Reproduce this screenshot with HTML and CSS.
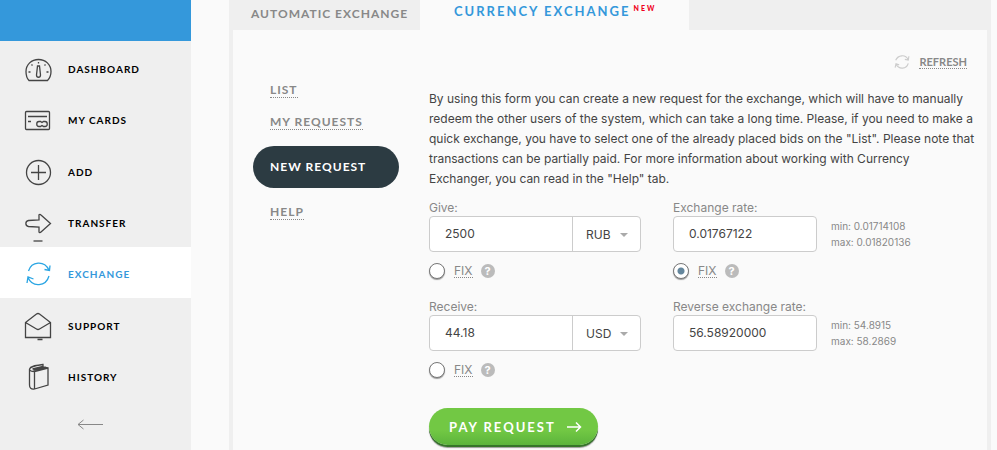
FILE: index.html
```html
<!DOCTYPE html>
<html lang="en">

<head>
    <meta charset="UTF-8">
    <meta name="viewport" content="width=device-width, initial-scale=1.0">
    <title>Currency Exchange</title>
    <link rel="stylesheet" href="styles.css">
</head>

<body>
    <div class="page">
        <aside class="sidebar">
            <div class="sidebar-top"></div>
            <nav class="main-menu">
                <a href="#dashboard">
                    <svg class="icon" viewBox="0 0 28 28">
                        <path d="M5 25.500C2.500 23 2 20 2 16.500C2 9.500 7.500 4.500 14.500 4.500S27 9.500 27 16.500C27 20 26 23 23.500 25.500Z" />
                        <path d="M13.500 11h2l1 9c0 3-4 3-4 0z" />
                        <path d="M14.500 7v1.500M7.500 9.500l1 1M21.500 9.500l-1 1M4.500 17h2M22.500 17h2" />
                    </svg>
                    <span>DASHBOARD</span>
                </a>
                <a href="#cards">
                    <svg class="icon" viewBox="0 0 28 28">
                        <rect x="1.500" y="5.500" width="24" height="18" rx="1" />
                        <path d="M4 10.500h19M4 15.500h3" />
                        <path d="M15 15.500h1.500l1.500 1 1.500-1H21c3 0 3 5 0 5h-1.500l-1.500-1-1.500 1H15c-3 0-3-5 0-5z" />
                    </svg>
                    <span>MY CARDS</span>
                </a>
                <a href="#add">
                    <svg class="icon" viewBox="0 0 28 28">
                        <circle cx="14.500" cy="14.500" r="12" />
                        <path d="M14.500 7v15M7 14.500h15" />
                    </svg>
                    <span>ADD</span>
                </a>
                <a href="#transfer">
                    <svg class="icon" viewBox="0 0 28 28">
                        <path d="M15 6.500C14.500 5.500 16 5 17 6L26.500 14.500L17 23C16 24 15 23.500 15 23V18L4.500 17.500C1 17 1 12 4.500 11.500L15 11Z" />
                        <path d="M9.500 32h9" />
                    </svg>
                    <span>TRANSFER</span>
                </a>
                <a href="#exchange" class="active">
                    <svg class="icon" viewBox="0 0 28 28">
                        <path d="M4.500 11C7.500 1.500 20 0 25 10M26 5.500L25.500 10.500L20.500 9.500M25 16C22 26.500 8.500 28 4 17.500M3 23L4 17L9.500 19" />
                    </svg>
                    <span>EXCHANGE</span>
                </a>
                <a href="#support">
                    <svg class="icon" viewBox="0 0 28 28">
                        <path d="M1.500 10.500L12.500 2Q14 1 15.500 2L26.500 10.500V25.500H1.500ZM1.500 10.500L12.500 17Q14 18 15.500 17L26.500 10.500M13.500 27.500h5" />
                    </svg>
                    <span>SUPPORT</span>
                </a>
                <a href="#history">
                    <svg class="icon" viewBox="0 0 28 28">
                        <path d="M10.500 8.500L24 5V22L10.500 26ZM10.500 26C7 26.500 5.500 25 5.500 22V6C5.500 8 7.500 8.500 10.500 8.500M5.500 6C6.500 3 12 2.500 19 1.500V4L24 5M8.500 6L19 3.500M9.500 7L22 4.500" />
                    </svg>
                    <span>HISTORY</span>
                </a>
            </nav>
            <button type="button" class="collapse" aria-label="Collapse menu">
                <svg width="28" height="12" viewBox="0 0 28 12">
                    <path d="M2 6.500h25M7.500 2L2 6.500L7.500 11" />
                </svg>
            </button>
        </aside>

        <main class="content">
            <nav class="tabs">
                <a href="#automatic">AUTOMATIC EXCHANGE</a>
                <a href="#currency" class="active">CURRENCY EXCHANGE<sup>NEW</sup></a>
            </nav>

            <div class="panel">
                <div class="toolbar">
                    <svg width="16" height="16" viewBox="0 0 28 28">
                        <path d="M3 11C7 1.500 20 0 25 10M26 4L25 10.500L19 9.500M25 16.500C22 26.500 8.500 28 3.500 17.500M2 24L3.500 17L9 19" />
                    </svg>
                    <a href="#refresh" class="dotted">REFRESH</a>
                </div>

                <div class="columns">
                    <ul class="sub-menu">
                        <li><a href="#list" class="dotted">LIST</a></li>
                        <li><a href="#my" class="dotted">MY REQUESTS</a></li>
                        <li class="active"><a href="#new">NEW REQUEST</a></li>
                        <li><a href="#help" class="dotted">HELP</a></li>
                    </ul>

                    <form class="request-form">
                        <p>
                            By using this form you can create a new request for the exchange, which will have to manually<br>
                            redeem the other users of the system, which can take a long time. Please, if you need to make a<br>
                            quick exchange, you have to select one of the already placed bids on the "List". Please note that<br>
                            transactions can be partially paid. For more information about working with Currency<br>
                            Exchanger, you can read in the "Help" tab.
                        </p>

                        <div class="fields">
                            <div class="field">
                                <label for="give">Give:</label>
                                <div class="amount">
                                    <input type="text" id="give" value="2500">
                                    <div class="currency">
                                        <select aria-label="Give currency">
                                            <option>RUB</option>
                                            <option>USD</option>
                                        </select>
                                    </div>
                                </div>
                                <div class="fix">
                                    <input type="radio" name="fix" id="fix-give">
                                    <label for="fix-give" class="dotted">FIX</label>
                                    <span class="hint">?</span>
                                </div>
                            </div>

                            <div class="field">
                                <label for="rate">Exchange rate:</label>
                                <div class="rate">
                                    <input type="text" id="rate" value="0.01767122">
                                    <div class="limits">min: 0.01714108<br>max: 0.01820136</div>
                                </div>
                                <div class="fix">
                                    <input type="radio" name="fix" id="fix-rate" checked>
                                    <label for="fix-rate" class="dotted">FIX</label>
                                    <span class="hint">?</span>
                                </div>
                            </div>

                            <div class="field">
                                <label for="receive">Receive:</label>
                                <div class="amount">
                                    <input type="text" id="receive" value="44.18">
                                    <div class="currency">
                                        <select aria-label="Receive currency">
                                            <option>USD</option>
                                            <option>RUB</option>
                                        </select>
                                    </div>
                                </div>
                                <div class="fix">
                                    <input type="radio" name="fix" id="fix-receive">
                                    <label for="fix-receive" class="dotted">FIX</label>
                                    <span class="hint">?</span>
                                </div>
                            </div>

                            <div class="field">
                                <label for="reverse">Reverse exchange rate:</label>
                                <div class="rate">
                                    <input type="text" id="reverse" value="56.58920000">
                                    <div class="limits">min: 54.8915<br>max: 58.2869</div>
                                </div>
                            </div>
                        </div>

                        <button type="submit" class="pay">
                            PAY REQUEST
                            <svg width="16" height="12" viewBox="0 0 16 12">
                                <path d="M1 6h13M10 1.500L14.500 6L10 10.500" />
                            </svg>
                        </button>
                    </form>
                </div>
            </div>
        </main>
    </div>
</body>

</html>
```
FILE: styles.css
```css
* {
    box-sizing: border-box;
}

body {
    margin: 0;
    background-color: #fafafa;
    color: #444;
    font-family: Inter, "Open Sans", sans-serif;
    font-size: 12px;
}

a {
    text-decoration: none;
}

svg {
    fill: none;
    stroke: currentColor;
}

.page {
    display: flex;
    min-height: 100vh;
}

/* Sidebar */
.sidebar {
    flex: 0 0 191px;
    background-color: #efefef;
}

.sidebar-top {
    height: 41px;
    background-color: #3498db;
}

.main-menu {
    display: grid;
    grid-auto-rows: 1fr;
    min-height: 360px;
}

.main-menu a {
    display: flex;
    align-items: center;
    gap: 16px;
    padding: 4px 0 0 24px;
    color: #000;
    font: bold 10px Lato, sans-serif;
    letter-spacing: 1px;
}

.main-menu .icon {
    width: 28px;
    height: 28px;
    overflow: visible;
    color: #444;
    stroke-width: 1.3;
}

.main-menu a.active {
    background-color: #fff;
    color: #3498db;
}

.main-menu a.active .icon {
    color: #2aa5e3;
}

.collapse {
    display: block;
    margin: 17px 0 0 76px;
    padding: 0;
    border: none;
    background: none;
    color: #888;
    cursor: pointer;
}

.collapse svg {
    display: block;
}

/* Content */
.content {
    display: flex;
    flex-direction: column;
    flex: 1;
    min-width: 0;
    margin: 0 6px 0 38px;
    padding: 0 4px;
    background-color: #efefef;
}

.tabs {
    display: flex;
    height: 30px;
    font: bold 12px Lato, sans-serif;
    letter-spacing: 1px;
}

.tabs a {
    flex: 0 0 187px;
    padding-left: 18px;
    line-height: 28px;
    color: #888;
    white-space: nowrap;
}

.tabs a.active {
    flex: 0 0 269px;
    padding-left: 34px;
    background-color: #fafafa;
    color: #3498db;
    font-size: 13px;
    line-height: 22px;
    letter-spacing: 2px;
}

.tabs sup {
    margin-left: 3px;
    color: #f00020;
    font-size: 7px;
    font-weight: 900;
    line-height: 1;
}

.panel {
    flex: 1;
    padding: 21px 20px 0;
    background-color: #fafafa;
}

.dotted {
    border-bottom: 1px dotted #888;
    color: #888;
}

.toolbar {
    display: flex;
    justify-content: flex-end;
    align-items: center;
    gap: 9px;
    height: 21px;
    color: #ccc;
    font: bold 11px Lato, sans-serif;
}

.toolbar svg {
    stroke-width: 2;
}

.columns {
    display: flex;
    gap: 30px;
}

/* Sub menu */
.sub-menu {
    flex: 0 0 146px;
    margin: 2px 0 0;
    padding: 0;
    list-style: none;
    font: bold 12px/32px Lato, sans-serif;
    letter-spacing: 1px;
}

.sub-menu li {
    padding-left: 17px;
}

.sub-menu .active {
    margin: 8px 0;
    border-radius: 21px;
    background-color: #2c3b42;
    line-height: 42px;
}

.sub-menu .active a {
    color: #fff;
}

/* Form */
.request-form {
    flex: 1;
    min-width: 0;
    padding-top: 17px;
}

.request-form p {
    margin: 0 0 11px;
    line-height: 20px;
    white-space: nowrap;
}

.fields {
    display: grid;
    grid-template-columns: 212px 1fr;
    gap: 20px 32px;
    color: #888;
}

.field > label {
    display: block;
    line-height: 16px;
}

.amount,
.rate > input {
    height: 36px;
    border: 1px solid #ccc;
    border-radius: 4px;
    background-color: #fff;
}

.amount {
    display: flex;
}

input,
select {
    margin: 0;
    color: #444;
    font: inherit;
}

input[type="text"] {
    width: 144px;
    padding: 0 15px 1px;
}

.amount input[type="text"] {
    width: 142px;
    border: none;
    background: none;
}

.currency {
    position: relative;
    flex: 1;
    border-left: 1px solid #ccc;
}

.currency select {
    width: 100%;
    height: 100%;
    padding: 1px 0 0 13px;
    border: none;
    background: none;
    appearance: none;
}

.currency::after {
    content: "";
    position: absolute;
    top: 16px;
    right: 12px;
    border: 4px solid transparent;
    border-top-color: #aaa;
    border-bottom: none;
    pointer-events: none;
}

.rate {
    display: flex;
    align-items: center;
    gap: 14px;
}

.limits {
    padding-bottom: 1px;
    font-size: 10px;
    line-height: 16px;
}

.fix {
    display: flex;
    align-items: center;
    gap: 8px;
    height: 27px;
    padding-top: 11px;
}

.fix input {
    width: 16px;
    height: 16px;
    margin-right: 1px;
    border: 1px solid #777;
    border-radius: 50%;
    background-color: #fff;
    box-shadow: 0 1px 1px #999;
    appearance: none;
}

.fix input:checked {
    background-image: radial-gradient(circle, #64869c 3px, transparent 4px);
}

.fix label {
    line-height: 12px;
}

.hint {
    width: 14px;
    height: 14px;
    border-radius: 50%;
    background-color: #bbb;
    color: #fff;
    font-size: 11px;
    font-weight: bold;
    line-height: 14px;
    text-align: center;
}

.pay {
    display: flex;
    align-items: center;
    gap: 10px;
    height: 37px;
    margin: 30px 0 3px;
    padding: 0 16px 0 20px;
    border: none;
    border-radius: 19px;
    background: linear-gradient(#72c844 60%, #5cb43c);
    box-shadow: 0 2px 0 #35752a, 0 3px 1px #999;
    color: #fff;
    font: bold 13px Lato, sans-serif;
    letter-spacing: 2px;
    cursor: pointer;
}

.pay svg {
    stroke-width: 1.5;
}
```
